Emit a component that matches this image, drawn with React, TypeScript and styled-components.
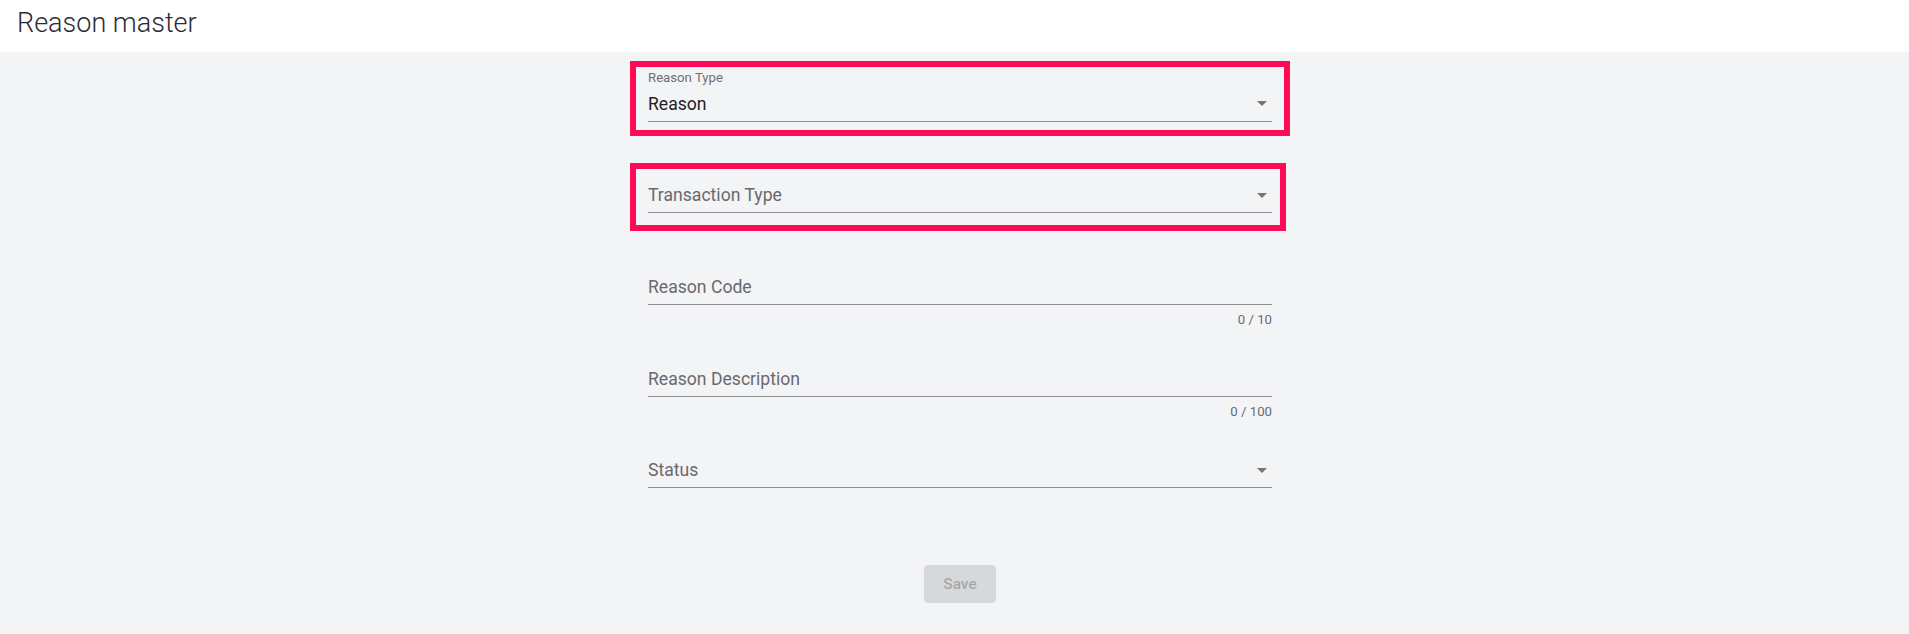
import styled, { createGlobalStyle } from "styled-components";

const GlobalStyle = createGlobalStyle`
  html, body {
    margin: 0;
    padding: 0;
    background: #f3f4f6;
    font-family: Roboto, "Liberation Sans", sans-serif;
  }
  * {
    box-sizing: border-box;
  }
`;

const ArrowDown = () => (
  <svg width="10" height="5" viewBox="0 0 10 5">
    <path d="M0 0 L10 0 L5 5 Z" fill="#757575" />
  </svg>
);

type FieldProps = {
  label: string;
  value?: string;
  select?: boolean;
  counter?: string;
  details?: boolean;
};

const TextField = ({ label, value, select, counter, details }: FieldProps) => {
  return (
    <FieldWrap>
      {value && <SmallLabel>{label}</SmallLabel>}
      <Slot $tall={!!value}>
        {value ? <Value>{value}</Value> : <Placeholder>{label}</Placeholder>}
        {select && (
          <ArrowBox>
            <ArrowDown />
          </ArrowBox>
        )}
      </Slot>
      {details && <Details>{counter}</Details>}
    </FieldWrap>
  );
};

const App = () => {
  return (
    <>
      <GlobalStyle />
      <Page>
        <Header>
          <Title>Reason master</Title>
        </Header>
        <Main>
          <Form>
            <Highlight $top={3} $right={12} $bottom={8}>
              <TextField label="Reason Type" value="Reason" select />
            </Highlight>
            <Highlight $top={9} $right={8} $bottom={12} $mt={27}>
              <TextField label="Transaction Type" select />
            </Highlight>
            <Fields>
              <TextField label="Reason Code" counter="0 / 10" details />
              <TextField label="Reason Description" counter="0 / 100" details />
              <TextField label="Status" select details />
            </Fields>
            <SaveButton disabled>Save</SaveButton>
          </Form>
        </Main>
      </Page>
    </>
  );
};

const Page = styled.div`
  min-height: 100vh;
  display: flex;
  flex-direction: column;
  background: #f3f4f6;
`;

const Header = styled.header`
  height: 52px;
  background: #ffffff;
  display: flex;
  align-items: center;
  padding-left: 17px;
`;

const Title = styled.h1`
  margin: 0;
  font-family: Roboto, "Liberation Sans", sans-serif;
  font-weight: 300;
  font-size: 27px;
  line-height: 32px;
  color: #2c2b36;
  position: relative;
  top: -3px;
`;

const Main = styled.main`
  flex: 1;
  display: flex;
  justify-content: center;
  padding: 9px 0 0 11px;
`;

const Form = styled.div`
  width: 624px;
  display: flex;
  flex-direction: column;
  align-items: stretch;
`;

const Highlight = styled.div<{
  $top: number;
  $right: number;
  $bottom: number;
  $mt?: number;
}>`
  border: 6px solid #ff0a54;
  margin: ${(p) => p.$mt || 0}px ${(p) => -(p.$right + 6)}px 0 -18px;
  padding: ${(p) => p.$top}px ${(p) => p.$right}px ${(p) => p.$bottom}px 12px;
`;

const Fields = styled.div`
  margin-top: 39px;
  display: flex;
  flex-direction: column;
  gap: 34.5px;
`;

const FieldWrap = styled.div`
  display: flex;
  flex-direction: column;
  width: 100%;
`;

const SmallLabel = styled.div`
  font-size: 13.2px;
  line-height: 16px;
  color: #6f6f72;
`;

const Slot = styled.div<{ $tall: boolean }>`
  box-sizing: content-box;
  height: ${(p) => (p.$tall ? 35 : 34)}px;
  display: flex;
  align-items: center;
  border-bottom: 1px solid #8c8c8e;
`;

const Value = styled.span`
  font-size: 17.6px;
  line-height: 20px;
  color: #1e1e24;
  flex: 1;
`;

const Placeholder = styled.span`
  font-size: 17.6px;
  line-height: 20px;
  color: #69696c;
  flex: 1;
`;

const ArrowBox = styled.span`
  width: 24px;
  height: 24px;
  display: flex;
  align-items: center;
  justify-content: center;
  margin-right: -2px;
`;

const Details = styled.div`
  height: 22px;
  padding-top: 7px;
  font-size: 13.2px;
  line-height: 15px;
  text-align: right;
  color: #6b6b70;
`;

const SaveButton = styled.button`
  align-self: center;
  margin-top: 55px;
  width: 72px;
  height: 38px;
  border: none;
  border-radius: 4px;
  background: #d7d8da;
  color: #a7a7a9;
  font-family: Roboto, "Liberation Sans", sans-serif;
  font-weight: 500;
  font-size: 15.4px;
  cursor: default;
`;

export default App;
